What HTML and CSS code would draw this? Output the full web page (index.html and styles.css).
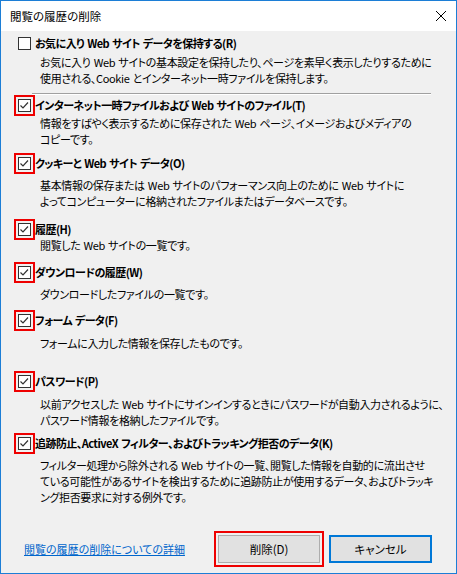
FILE: index.html
```html
<!DOCTYPE html>
<html>

<head>
	<title>閲覧の履歴の削除</title>
	<meta charset="utf-8">
	<link rel="stylesheet" href="styles.css">
</head>

<body>
	<div class="window">
		<div class="titlebar">
			<span class="title">閲覧の履歴の削除</span>
			<svg class="close" width="12" height="12" viewBox="0 0 12 12">
				<path d="M1 1 L11 11 M11 1 L1 11" stroke="#000" stroke-width="1" fill="none"/>
			</svg>
		</div>

		<div class="content">
			<div class="opt opt-fav">
				<div class="head">
					<span class="mark"><span class="box"></span></span>
					<span class="label">お気に入り Web サイト データを保持する(R)</span>
				</div>
				<p class="desc d1">お気に入り Web サイトの基本設定を保持したり、ページを素早く表示したりするために<br>使用される、Cookie とインターネット一時ファイルを保持します。</p>
			</div>

			<div class="sep"></div>

			<div class="opt opt-temp">
				<div class="head">
					<span class="mark on"><span class="box"><svg width="13" height="13" viewBox="0 0 13 13"><path d="M2.5 6.5 L5 9 L10 3.5" stroke="#333" stroke-width="1.2" fill="none"/></svg></span></span>
					<span class="label">インターネット一時ファイルおよび Web サイトのファイル(T)</span>
				</div>
				<p class="desc d0">情報をすばやく表示するために保存された Web ページ、イメージおよびメディアの<br>コピーです。</p>
			</div>

			<div class="opt opt-cookie">
				<div class="head">
					<span class="mark on"><span class="box"><svg width="13" height="13" viewBox="0 0 13 13"><path d="M2.5 6.5 L5 9 L10 3.5" stroke="#333" stroke-width="1.2" fill="none"/></svg></span></span>
					<span class="label">クッキーと Web サイト データ(O)</span>
				</div>
				<p class="desc">基本情報の保存または Web サイトのパフォーマンス向上のために Web サイトに<br>よってコンピューターに格納されたファイルまたはデータベースです。</p>
			</div>

			<div class="opt opt-history">
				<div class="head">
					<span class="mark on"><span class="box"><svg width="13" height="13" viewBox="0 0 13 13"><path d="M2.5 6.5 L5 9 L10 3.5" stroke="#333" stroke-width="1.2" fill="none"/></svg></span></span>
					<span class="label">履歴(H)</span>
				</div>
				<p class="desc dm">閲覧した Web サイトの一覧です。</p>
			</div>

			<div class="opt opt-download">
				<div class="head">
					<span class="mark on"><span class="box"><svg width="13" height="13" viewBox="0 0 13 13"><path d="M2.5 6.5 L5 9 L10 3.5" stroke="#333" stroke-width="1.2" fill="none"/></svg></span></span>
					<span class="label">ダウンロードの履歴(W)</span>
				</div>
				<p class="desc">ダウンロードしたファイルの一覧です。</p>
			</div>

			<div class="opt opt-form">
				<div class="head">
					<span class="mark on"><span class="box"><svg width="13" height="13" viewBox="0 0 13 13"><path d="M2.5 6.5 L5 9 L10 3.5" stroke="#333" stroke-width="1.2" fill="none"/></svg></span></span>
					<span class="label">フォーム データ(F)</span>
				</div>
				<p class="desc d5">フォームに入力した情報を保存したものです。</p>
			</div>

			<div class="opt opt-pass">
				<div class="head">
					<span class="mark on"><span class="box"><svg width="13" height="13" viewBox="0 0 13 13"><path d="M2.5 6.5 L5 9 L10 3.5" stroke="#333" stroke-width="1.2" fill="none"/></svg></span></span>
					<span class="label">パスワード(P)</span>
				</div>
				<p class="desc d5">以前アクセスした Web サイトにサインインするときにパスワードが自動入力されるように、<br>パスワード情報を格納したファイルです。</p>
			</div>

			<div class="opt opt-track">
				<div class="head">
					<span class="mark on"><span class="box"><svg width="13" height="13" viewBox="0 0 13 13"><path d="M2.5 6.5 L5 9 L10 3.5" stroke="#333" stroke-width="1.2" fill="none"/></svg></span></span>
					<span class="label">追跡防止、ActiveX フィルター、およびトラッキング拒否のデータ(K)</span>
				</div>
				<p class="desc">フィルター処理から除外される Web サイトの一覧、閲覧した情報を自動的に流出させ<br>ている可能性があるサイトを検出するために追跡防止が使用するデータ、およびトラッキ<br>ング拒否要求に対する例外です。</p>
			</div>

			<div class="footer">
				<a class="more" href="#">閲覧の履歴の削除についての詳細</a>
				<div class="buttons">
					<button class="btn btn-delete">削除(D)</button>
					<button class="btn btn-cancel">キャンセル</button>
				</div>
			</div>
		</div>
	</div>
</body>

</html>
```

FILE: styles.css
```css
* {
	margin: 0;
	box-sizing: border-box;
}

body {
	background-color: #f0f0f0;
	font-family: "Noto Sans CJK JP", "Noto Sans", sans-serif;
	font-size: 11px;
	font-feature-settings: "palt";
	color: #000;
}

.window {
	width: 457px;
	height: 574px;
	border: 1px solid #1c7ed6;
	background-color: #f0f0f0;
}

.titlebar {
	height: 30px;
	background-color: #fff;
	display: flex;
	align-items: center;
	justify-content: space-between;
	padding-left: 9px;
	padding-right: 9px;
}

.title {
	font-size: 11.5px;
	line-height: 16px;
}

.content {
	padding-top: 2px;
}

.head {
	height: 20px;
	display: flex;
	align-items: center;
	padding-left: 13px;
}

.mark {
	border: 2px solid transparent;
	padding: 2px;
	display: flex;
}

.mark.on {
	border-color: #ee0000;
}

.box {
	width: 13px;
	height: 13px;
	border: 1px solid #333;
	background-color: #fff;
	display: flex;
	align-items: center;
	justify-content: center;
}

.box svg {
	flex: none;
}

.label {
	font-weight: bold;
	line-height: 16px;
	letter-spacing: -0.55px;
	word-spacing: 1px;
	white-space: nowrap;
}

.desc {
	padding-left: 39px;
	line-height: 16px;
	letter-spacing: -0.35px;
	word-spacing: 1px;
	white-space: nowrap;
	margin-top: 4px;
}

.desc.d0 {
	margin-top: 0;
}

.desc.d1 {
	margin-top: 1px;
}

.desc.dm {
	margin-top: -2px;
}

.desc.d5 {
	margin-top: 5px;
}

.sep {
	margin: 7px 25px 0 31px;
	border-top: 1px solid #a0a0a0;
	border-bottom: 1px solid #fff;
}

.opt-cookie {
	margin-top: 6px;
}

.opt-history {
	margin-top: 10px;
}

.opt-download {
	margin-top: 9px;
}

.opt-form {
	margin-top: 8px;
}

.opt-pass {
	margin-top: 20px;
}

.opt-track {
	margin-top: 5px;
}

.footer {
	margin-top: 30px;
	display: flex;
	align-items: center;
	justify-content: space-between;
	padding-left: 23px;
	padding-right: 24px;
}

.more {
	color: #0066cc;
	text-decoration: underline;
	line-height: 16px;
}

.buttons {
	display: flex;
	gap: 9px;
}

.btn {
	width: 102px;
	height: 28px;
	background-color: #e1e1e1;
	border: 1px solid #adadad;
	font-family: "Noto Sans CJK JP", "Noto Sans", sans-serif;
	font-size: 11.5px;
	font-feature-settings: "palt";
	color: #000;
	padding: 0;
}

.btn-delete {
	outline: 2px solid #ee0000;
	outline-offset: 2px;
}

.btn-cancel {
	width: 103px;
	border: 2px solid #0078d7;
}
```
